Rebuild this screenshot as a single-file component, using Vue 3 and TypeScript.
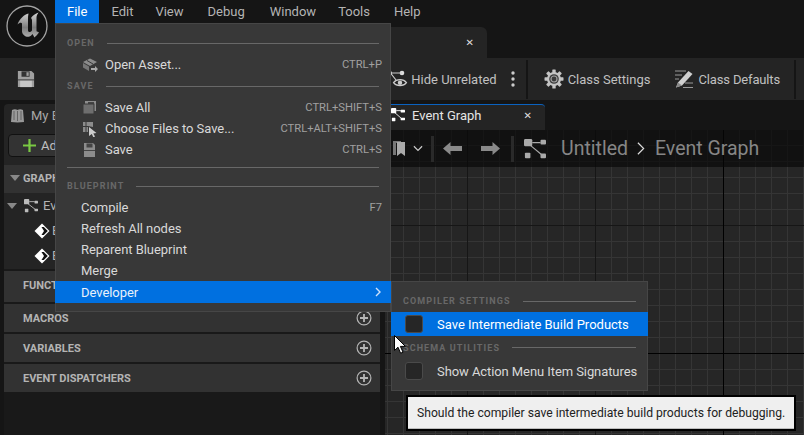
<script setup lang="ts">
interface MenuRow { kind: 'head' | 'item' | 'sep'; label?: string; keys?: string; icon?: string; active?: boolean }

const topMenus: string[] = ['File', 'Edit', 'View', 'Debug', 'Window', 'Tools', 'Help']

const fileMenu: MenuRow[] = [
  { kind: 'head', label: 'OPEN' },
  { kind: 'item', label: 'Open Asset...', keys: 'CTRL+P', icon: 'open' },
  { kind: 'head', label: 'SAVE' },
  { kind: 'item', label: 'Save All', keys: 'CTRL+SHIFT+S', icon: 'saveall' },
  { kind: 'item', label: 'Choose Files to Save...', keys: 'CTRL+ALT+SHIFT+S', icon: 'choose' },
  { kind: 'item', label: 'Save', keys: 'CTRL+S', icon: 'save' },
  { kind: 'sep' },
  { kind: 'head', label: 'BLUEPRINT' },
  { kind: 'item', label: 'Compile', keys: 'F7' },
  { kind: 'item', label: 'Refresh All nodes' },
  { kind: 'item', label: 'Reparent Blueprint' },
  { kind: 'item', label: 'Merge' },
  { kind: 'item', label: 'Developer', active: true },
]

const addSections: string[] = ['MACROS', 'VARIABLES', 'EVENT DISPATCHERS']
</script>

<template>
  <div class="app">
    <div class="titlebar">
      <div class="logo">
        <svg width="42" height="42" viewBox="0 0 42 42">
          <defs>
            <linearGradient id="ue" x1="0" y1="0" x2="0" y2="1">
              <stop offset="0" stop-color="#d4d4d4" />
              <stop offset="0.6" stop-color="#7d7d7d" />
              <stop offset="1" stop-color="#b0b0b0" />
            </linearGradient>
          </defs>
          <circle cx="21" cy="21" r="20" fill="#111" stroke="#a4a4a4" stroke-width="1.300" />
          <g transform="translate(-6.500 -5.500)">
            <path d="M29 14C25 15 20 19 18 25c2-2 4-2.500 4.500-1v8c.5 4 4.500 6 7.500 5 1.500-.5 2-1.500 3-2.500l2 3.500c1-1 3-3 4.500-5l-1.500-1c-.5.500-1 0-1-1V18c0-2 1-3.500 2-5-3 1-6 3-7.500 5.500.5.500 1 1.500 1 2.500v10c-1.500 2-3.500 2-4 0V20c0-2 0-4 .5-6z" fill="url(#ue)" />
          </g>
        </svg>
      </div>
      <div class="title-main">
        <nav class="menubar">
          <span v-for="(m, i) in topMenus" :key="m" class="top-item" :class="{ open: i === 0 }">{{ m }}</span>
        </nav>
        <div class="doc-tabs">
          <div class="doc-tab"><span class="close">✕</span></div>
        </div>
      </div>
    </div>

    <div class="toolbar">
      <svg class="tb-save" width="18" height="18" viewBox="0 0 20 20">
        <path d="M1 1h15l3 3v15H1z" fill="#a0a0a0" />
        <rect x="5" y="1.500" width="9" height="6" fill="#333" />
        <rect x="10.500" y="2.500" width="2.500" height="4" fill="#a0a0a0" />
        <rect x="1" y="10.500" width="18" height="1" fill="#333" />
        <rect x="3.500" y="12" width="13" height="7" fill="#c8c8c8" />
      </svg>
      <div class="tb-right">
        <div class="tb-btn hide-btn">
          <svg width="24" height="24" viewBox="0 0 24 24" fill="none" stroke="#ccc">
            <circle cx="4" cy="6" r="2" fill="#ddd" stroke="none" />
            <circle cx="16" cy="6" r="2.300" fill="#ddd" stroke="none" />
            <path d="M4 6h12M4.500 6l5.500 7" stroke-width="1.200" />
            <path d="M7.500 15.700c3-4 10-4 13 0-3 4-10 4-13 0z" stroke-width="1.200" />
            <circle cx="14" cy="15.700" r="2.200" fill="#ccc" stroke="none" />
          </svg>
          <span>Hide Unrelated</span>
        </div>
        <svg class="dots" width="4" height="16" viewBox="0 0 4 16" fill="#ccc">
          <circle cx="2" cy="2" r="1.700" /><circle cx="2" cy="8" r="1.700" /><circle cx="2" cy="14" r="1.700" />
        </svg>
        <div class="tb-sep"></div>
        <div class="tb-btn settings-btn">
          <svg width="20" height="20" viewBox="0 0 20 20">
            <g fill="#c4c4c4">
              <rect x="8.300" y="0.500" width="3.400" height="19" rx=".6" />
              <rect x="8.300" y="0.500" width="3.400" height="19" rx=".6" transform="rotate(45 10 10)" />
              <rect x="8.300" y="0.500" width="3.400" height="19" rx=".6" transform="rotate(90 10 10)" />
              <rect x="8.300" y="0.500" width="3.400" height="19" rx=".6" transform="rotate(135 10 10)" />
              <circle cx="10" cy="10" r="7" />
            </g>
            <circle cx="10" cy="10" r="4.800" fill="#3a3a3a" />
            <circle cx="10" cy="10" r="3" fill="none" stroke="#a0a0a0" stroke-width="1.200" />
          </svg>
          <span>Class Settings</span>
        </div>
        <div class="tb-btn defaults-btn">
          <svg width="20" height="20" viewBox="0 0 20 20">
            <path d="M2 18.500l2-5L14.500 2l4 3L8 16.500z" fill="#d0d0d0" />
            <path d="M2 18.500l2-5 4 3z" fill="#888" />
            <path d="M1 2h11M1 6h7M1 10h4M11 14h8M9 18.500h10" stroke="#999" stroke-width="1" />
          </svg>
          <span>Class Defaults</span>
        </div>
        <div class="tb-sep end"></div>
      </div>
    </div>

    <div class="workspace">
      <aside class="left-panel">
        <div class="lp-tab">
          <svg width="15" height="15" viewBox="0 0 15 15">
            <path d="M1 14L2 2c2-1 4-1 5.500 0C9 1 11 1 13 2l1 12-6.500.6z" fill="#999" />
            <path d="M4 3v9M7.500 3v10M11 3v9" stroke="#555" stroke-width=".8" />
          </svg>
          <span>My Blueprint</span>
        </div>
        <div class="lp-body">
          <div class="add-row">
            <button class="add-btn">
              <svg width="13" height="13" viewBox="0 0 14 14"><path d="M5.800 0h2.400v5.800H14v2.400H8.200V14H5.800V8.200H0V5.800h5.800z" fill="#7ac943" /></svg>
              <span>Add</span>
            </button>
          </div>
          <div class="section graphs">
            <div class="sec-head"><i class="tri"></i><span>GRAPHS</span></div>
          </div>
          <div class="tree">
            <div class="tree-row first">
              <i class="tri"></i>
              <svg width="14" height="14" viewBox="0 0 16 16" fill="#bbb">
                <rect x="0" y="0" width="6" height="6" rx="1" /><rect x="12" y="2" width="4" height="3" rx=".5" /><rect x="1" y="11" width="4" height="4" rx=".5" /><rect x="12" y="11" width="4" height="3" rx=".5" />
                <path d="M6 3h6M4 5l9 7" stroke="#bbb" fill="none" />
              </svg>
              <span>Event Graph</span>
            </div>
            <div v-for="n in 2" :key="n" class="tree-row child">
              <svg width="16" height="16" viewBox="0 0 16 16">
                <path d="M8 .5L15.500 8 8 15.500.5 8z" fill="#fff" />
                <path d="M7.500 4h2.300l4 4-4 4H7.500L10 8z" fill="#111" />
              </svg>
              <span>Event</span>
            </div>
          </div>
          <div class="section functions"><div class="sec-head"><span>FUNCTIONS</span></div></div>
          <div v-for="s in addSections" :key="s" class="section">
            <div class="sec-head">
              <span>{{ s }}</span>
              <svg class="plus" width="16" height="16" viewBox="0 0 16 16" fill="none" stroke="#b5b5b5">
                <circle cx="8" cy="8" r="6.900" stroke-width="1.200" />
                <path d="M8 4v8M4 8h8" stroke-width="1.800" />
              </svg>
            </div>
          </div>
        </div>
      </aside>

      <section class="graph-panel">
        <div class="graph-tabs">
          <div class="graph-tab">
            <svg width="14" height="14" viewBox="0 0 16 16" fill="#fff">
              <rect x="0" y="0" width="6" height="6" rx="1" /><rect x="11" y="2" width="5" height="3" rx=".5" /><rect x="1" y="11" width="4" height="4" rx=".5" /><rect x="11" y="11" width="5" height="3" rx=".5" />
              <path d="M6 3h5M4 5l8 7" stroke="#fff" fill="none" />
            </svg>
            <span class="gt-label">Event Graph</span>
            <span class="close gt-close">✕</span>
          </div>
        </div>
        <div class="graph">
          <div class="graph-bar">
            <svg width="12" height="16" viewBox="0 0 12 16">
              <path d="M0 0h8v2H3v12H0z" fill="#777" /><path d="M4 1h8v14l-4-3-4 3z" fill="#aaa" />
            </svg>
            <svg class="caret" width="10" height="7" viewBox="0 0 11 7" fill="none" stroke="#ccc" stroke-width="1.300"><path d="M1 1l4.500 4.500L10 1" /></svg>
            <div class="gb-sep first"></div>
            <svg class="arrow" width="19" height="13" viewBox="0 0 19 13" fill="#8a8a8a"><path d="M0 6.500L7.500 0v4H19v5H7.500v4z" /></svg>
            <svg class="arrow" width="19" height="13" viewBox="0 0 19 13" fill="#8a8a8a"><path d="M19 6.500L11.500 0v4H0v5h11.500v4z" /></svg>
            <div class="gb-sep second"></div>
            <svg class="crumb-icon" width="22" height="22" viewBox="0 0 24 24" fill="#aaa">
              <rect x="0" y="1" width="9" height="8" rx="1.500" /><rect x="18" y="2" width="6" height="5" rx="1" /><rect x="1" y="16" width="6" height="6" rx="1" /><rect x="18" y="17" width="6" height="5" rx="1" />
              <path d="M9 5h9M7 8l12 10" stroke="#aaa" fill="none" stroke-width="1.200" />
            </svg>
            <span class="crumb">Untitled</span>
            <svg class="crumb-chev" width="8" height="15" viewBox="0 0 9 15" fill="none" stroke="#ddd" stroke-width="1.300"><path d="M1 1l6.500 6.500L1 14" /></svg>
            <span class="crumb">Event Graph</span>
          </div>
        </div>
      </section>
    </div>

    <div class="menu file-menu">
      <template v-for="(r, i) in fileMenu" :key="i">
        <div v-if="r.kind === 'head'" class="m-head"><span>{{ r.label }}</span><i></i></div>
        <div v-else-if="r.kind === 'sep'" class="m-sep"></div>
        <div v-else class="m-item" :class="{ active: r.active, 'with-icon': r.icon }">
          <svg v-if="r.icon === 'open'" class="m-icon" width="16" height="16" viewBox="0 0 16 16">
            <path d="M1 5l7-3.500L15 5 8 9z" fill="#8c8c8c" /><path d="M1 6l6 3.500V14l-6-3.500z" fill="#777" /><path d="M9 11h4V9l3 3-3 3v-2H9z" fill="#aaa" />
            <path d="M5 3.500l6 3.500" stroke="#383838" />
          </svg>
          <svg v-else-if="r.icon === 'saveall'" class="m-icon" width="16" height="16" viewBox="0 0 16 16">
            <rect x="3" y="1" width="11" height="10" fill="#8c8c8c" /><rect x="6" y="2" width="6" height="3" fill="#444" /><rect x="1" y="4" width="11" height="10" fill="#6e6e6e" stroke="#383838" />
          </svg>
          <svg v-else-if="r.icon === 'choose'" class="m-icon" width="16" height="16" viewBox="0 0 16 16">
            <path d="M1 1h10v5L6 5v6H1z" fill="#8c8c8c" /><path d="M1 5.500h5M4 1v10" stroke="#383838" /><path d="M7 6l7.500 6-3.200.4 1.700 3.200-1.600.8-1.600-3.300L7 15z" fill="#ccc" />
          </svg>
          <svg v-else-if="r.icon === 'save'" class="m-icon" width="16" height="16" viewBox="0 0 16 16">
            <path d="M2 1h9l2 2v12H2z" fill="#8c8c8c" /><rect x="4.500" y="1.500" width="6" height="4" fill="#444" /><rect x="2" y="8" width="11" height="1" fill="#444" />
          </svg>
          <span class="m-label">{{ r.label }}</span>
          <span v-if="r.keys" class="m-keys">{{ r.keys }}</span>
          <svg v-if="r.active" class="m-chev" width="7" height="10" viewBox="0 0 7 10" fill="none" stroke="#cfe2fa" stroke-width="1.400"><path d="M1 1l4 4-4 4" /></svg>
        </div>
      </template>
    </div>

    <div class="menu sub-menu">
      <div class="m-head sub"><span>COMPILER SETTINGS</span><i></i></div>
      <div class="s-item active"><span class="check"></span><span>Save Intermediate Build Products</span></div>
      <div class="m-head sub second"><span>SCHEMA UTILITIES</span><i></i></div>
      <div class="s-item"><span class="check"></span><span class="tight">Show Action Menu Item Signatures</span></div>
    </div>

    <svg class="cursor" width="12" height="19" viewBox="0 0 12 19">
      <path d="M.5.500v15l3.500-3.300 2.600 6 2.400-1-2.600-5.800h5z" fill="#fff" stroke="#000" stroke-width="1" />
    </svg>

    <div class="tooltip">Should the compiler save intermediate build products for debugging.</div>
  </div>
</template>

<style>
html, body { margin: 0; background: #151515; }
</style>

<style scoped>
.app {
  position: relative;
  width: 804px;
  height: 435px;
  overflow: hidden;
  display: flex;
  flex-direction: column;
  background: #151515;
  color: #c0c0c0;
  font-family: Roboto, "Noto Sans", sans-serif;
  font-size: 13px;
}
.titlebar { display: flex; height: 58px; flex: none; }
.logo { width: 55px; flex: none; padding: 5px 0 0 6px; box-sizing: border-box; }
.title-main { flex: 1; display: flex; flex-direction: column; }
.menubar { display: flex; height: 23px; align-items: center; }
.top-item { padding: 0 12px; line-height: 23px; color: #b4b4b4; }
.top-item.open { background: #0070e0; color: #fff; }
.top-item:nth-child(2) { padding-right: 10px; }
.top-item:nth-child(5) { padding-left: 13px; padding-right: 10px; }
.doc-tabs { flex: 1; padding-top: 4px; display: flex; }
.doc-tab {
  width: 432px;
  background: #242424;
  border-radius: 0 6px 0 0;
  display: flex;
  justify-content: flex-end;
  align-items: center;
}
.doc-tab .close { margin-right: 13px; }
.close { color: #ddd; font-size: 10px; font-weight: 700; font-family: "DejaVu Sans", sans-serif; }

.toolbar {
  height: 42px;
  flex: none;
  display: flex;
  align-items: center;
  justify-content: space-between;
  background: #242424;
}
.tb-save { margin-left: 17px; }
.tb-right { display: flex; align-items: center; color: #c0c0c0; }
.tb-btn { display: flex; align-items: center; }
.hide-btn svg { margin-right: 1px; }
.dots { margin-left: 14px; }
.tb-sep { width: 2px; height: 39px; background: #151515; margin-left: 11px; }
.tb-sep.end { margin-left: 14px; margin-right: 8px; }
.settings-btn { margin-left: 16px; gap: 4px; }
.defaults-btn { margin-left: 24px; gap: 4px; letter-spacing: -0.15px; }

.workspace { flex: 1; display: flex; min-height: 0; padding-top: 4px; }
.left-panel { width: 376px; margin-left: 4px; flex: none; display: flex; flex-direction: column; }
.lp-tab {
  height: 26px;
  width: 140px;
  background: #242424;
  border-radius: 4px 4px 0 0;
  display: flex;
  align-items: center;
  gap: 6px;
  padding: 0 0 3px 6px;
  box-sizing: border-box;
  color: #a8a8a8;
}
.lp-body { flex: 1; background: #191919; display: flex; flex-direction: column; }
.add-row { height: 35px; background: #242424; padding: 4px 4px 0; box-sizing: border-box; }
.add-btn {
  height: 23px;
  width: 80px;
  background: #333;
  border: 1px solid #111;
  border-radius: 4px;
  color: #c0c0c0;
  font: inherit;
  display: flex;
  align-items: center;
  gap: 5px;
  padding: 0 0 0 14px;
}
.section { background: #323232; margin-bottom: 2px; }
.sec-head {
  height: 28px;
  display: flex;
  align-items: center;
  justify-content: space-between;
  padding: 0 8px 0 19px;
  box-sizing: border-box;
  font-size: 11px;
  font-weight: 700;
  color: #b4b4b4;
  letter-spacing: -0.02px;
}
.functions .sec-head { height: 31px; padding-bottom: 3px; }
.graphs .sec-head { justify-content: flex-start; padding: 0 8px 2px 6px; gap: 3px; }
.tri {
  width: 0;
  height: 0;
  flex: none;
  border-left: 5px solid transparent;
  border-right: 5px solid transparent;
  border-top: 6px solid #888;
}
.tree { height: 76px; background: #242424; margin-bottom: 2px; margin-top: -2px; }
.tree-row {
  height: 25px;
  width: 51px;
  display: flex;
  align-items: center;
  overflow: hidden;
  white-space: nowrap;
  color: #b4b4b4;
}
.tree-row.first { padding-left: 3px; box-sizing: border-box; }
.tree-row.first svg { margin: 0 5px 0 7px; flex: none; }
.tree-row.child { padding-left: 30px; box-sizing: border-box; gap: 2px; }
.tree-row.child svg { flex: none; }

.graph-panel { flex: 1; margin-left: 5px; display: flex; flex-direction: column; min-width: 0; }
.graph-tabs { height: 26px; flex: none; display: flex; }
.graph-tab {
  width: 160px;
  background: #242424;
  border-top: 1px solid #0a62c0;
  border-radius: 4px 4px 0 0;
  display: flex;
  align-items: center;
  box-sizing: border-box;
  padding: 0 0 5px 6px;
  color: #e4e4e4;
}
.gt-label { margin-left: 7px; font-size: 13px; }
.gt-close { margin-left: auto; margin-right: 13px; }
.graph {
  flex: 1;
  background-color: #262626;
  background-image:
    linear-gradient(to right, #000 0 1px, transparent 1px),
    linear-gradient(to bottom, #000 0 1px, transparent 1px),
    linear-gradient(to right, #161616 0 1px, transparent 1px),
    linear-gradient(to bottom, #161616 0 1px, transparent 1px),
    linear-gradient(to right, #353535 0 1px, transparent 1px),
    linear-gradient(to bottom, #353535 0 1px, transparent 1px);
  background-size: 100% 100%, 100% 100%, 128px 128px, 128px 128px, 16px 16px, 16px 16px;
  background-position: 338px 0, 0 223px, 82px 95px, 82px 95px, 2px 15px, 2px 15px;
  background-repeat: no-repeat, no-repeat, repeat, repeat, repeat, repeat;
}
.graph-bar {
  height: 37px;
  background: rgba(8, 8, 8, 0.68);
  display: flex;
  align-items: center;
  padding-left: 8px;
}
.caret { margin-left: 8px; }
.gb-sep { width: 3px; height: 26px; background: #2a2a2a; }
.gb-sep.first { margin: 0 9px 0 8px; }
.gb-sep.second { margin: 0 10px 0 11px; }
.arrow + .arrow { margin-left: 19px; }
.crumb { font-size: 19.500px; color: #868686; }
.crumb-icon { margin-right: 15px; }
.crumb-chev { margin: 0 10px 0 9px; }

.menu {
  position: absolute;
  background: #383838;
  border: 1px solid #464646;
  box-sizing: border-box;
}
.file-menu { left: 55px; top: 23px; width: 336px; height: 289px; padding-top: 8px; }
.sub-menu { left: 391px; top: 281px; width: 257px; height: 110px; padding-top: 8px; }
.m-head {
  height: 22px;
  display: flex;
  align-items: center;
  padding: 0 11px;
  gap: 12px;
  font-size: 9px;
  font-weight: 700;
  letter-spacing: 1.100px;
  color: #686868;
}
.m-head i { flex: 1; height: 1px; background: #686868; }
.m-sep { height: 1px; background: #686868; margin: 7px 11px; }
.m-item {
  height: 21px;
  display: flex;
  align-items: center;
  padding: 0 8px 0 25px;
  color: #d8d8d8;
}
.m-item.with-icon { padding-left: 26px; }
.m-icon { margin-right: 7px; }
.m-label { letter-spacing: -0.05px; }
.m-keys { margin-left: auto; font-size: 11.200px; color: #a0a0a0; }
.m-item.active { background: #0070e0; color: #e8f1fb; height: 22px; margin: 0 -1px; padding-left: 26px; }
.m-chev { margin-left: auto; margin-right: 1px; }
.s-item {
  height: 24px;
  display: flex;
  align-items: center;
  gap: 14px;
  padding-left: 14px;
  color: #d8d8d8;
  margin: 0 -1px 0 -1px;
}
.s-item.active { background: #0070e0; color: #fff; }
.tight { letter-spacing: -0.08px; }
.check {
  width: 16px;
  height: 16px;
  background: #262626;
  border: 1px solid #4a4a4a;
  border-radius: 3px;
  flex: none;
}
.sub.second { height: 23px; }
.cursor { position: absolute; left: 394px; top: 335px; }
.tooltip {
  position: absolute;
  left: 408px;
  top: 397px;
  width: 386px;
  height: 32px;
  box-sizing: border-box;
  background: #efefef;
  color: #222;
  padding-left: 9px;
  line-height: 32px;
  font-size: 12.150px;
  box-shadow: 0 0 0 2px #000;
  border-bottom: 1px solid #bdbdbd;
  white-space: nowrap;
}
</style>
